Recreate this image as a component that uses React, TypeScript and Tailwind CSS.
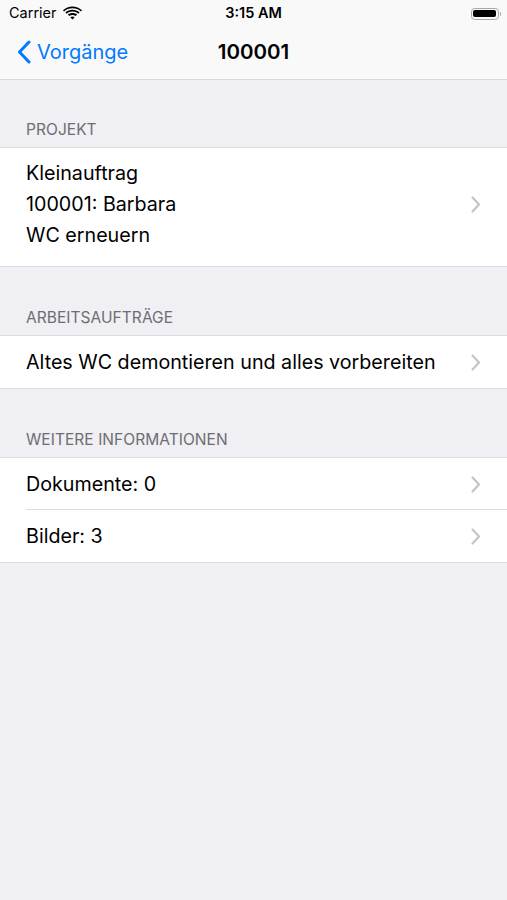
import React from "react";

const Chevron = () => (
  <svg width="10" height="17" viewBox="0 0 10 17" className="shrink-0">
    <path d="M1.5 1.5 L8 8.5 L1.5 15.5" fill="none" stroke="#c4c4c9" strokeWidth="2.2" strokeLinecap="round" strokeLinejoin="round" />
  </svg>
);

const Header = ({ title, h }: { title: string; h: string }) => (
  <div className={`${h} flex items-end pl-[26px] pb-[8px]`}>
    <span className="text-[15.5px] leading-[18px] tracking-[0.05px] text-[#6d6d72] uppercase">{title}</span>
  </div>
);

const Row = ({ text, sep }: { text: string; sep?: boolean }) => (
  <div className="relative flex h-[52px] items-center justify-between pl-[26px] pr-[26px]">
    <span className="text-[19.7px] leading-[24px] text-black">{text}</span>
    <Chevron />
    {sep && <div className="absolute bottom-0 left-[26px] right-0 h-px bg-[#dcdce0]" />}
  </div>
);

export default function App() {
  return (
    <div className="min-h-[900px] w-[507px] bg-[#efeff4]" style={{ fontFamily: "Inter, 'Liberation Sans', sans-serif" }}>
      {/* status + nav */}
      <div className="bg-[#f9f9f9] border-b border-[#d9d9dc]">
        <div className="relative flex h-[25px] items-center pl-[9px] pr-[6px] pt-[2px]">
          <span className="text-[14.5px] leading-none text-black">Carrier</span>
          <svg width="19" height="14" viewBox="0 0 19 14" className="ml-[6px] mt-[-2px]">
            <path d="M9.5 2.2 C6.2 2.2 3.3 3.4 1 5.4 L0 4.2 C2.6 1.9 5.9 0.5 9.5 0.5 C13.1 0.5 16.4 1.9 19 4.2 L18 5.4 C15.7 3.4 12.8 2.2 9.5 2.2 Z" fill="#000" />
            <path d="M9.5 5.6 C7.3 5.6 5.3 6.4 3.7 7.7 L2.4 6.3 C4.3 4.7 6.8 3.8 9.5 3.8 C12.2 3.8 14.7 4.7 16.6 6.3 L15.3 7.7 C13.7 6.4 11.7 5.6 9.5 5.6 Z" fill="#000" />
            <path d="M9.5 8.9 C8.3 8.9 7.2 9.3 6.3 10 L4.9 8.6 C6.2 7.6 7.8 7.1 9.5 7.1 C11.2 7.1 12.8 7.6 14.1 8.6 L12.7 10 C11.8 9.3 10.7 8.9 9.5 8.9 Z" fill="#000" />
            <path d="M9.5 13.5 L7.4 11.4 C8 10.9 8.7 10.6 9.5 10.6 C10.3 10.6 11 10.9 11.6 11.4 Z" fill="#000" />
          </svg>
          <span className="absolute left-1/2 -translate-x-1/2 text-[14.5px] font-semibold leading-none text-black">3:15 AM</span>
          <div className="ml-auto flex items-center">
            <div className="flex h-[12px] w-[28px] items-center rounded-[3.5px] border border-[#a8a8a8] p-[1.5px]">
              <div className="h-full w-full rounded-[2px] bg-black" />
            </div>
            <div className="ml-[1px] h-[4px] w-[1.5px] rounded-r-sm bg-[#a8a8a8]" />
          </div>
        </div>
        <div className="relative flex h-[54px] items-center">
          <div className="flex items-center pl-[17px]">
            <svg width="14" height="24" viewBox="0 0 14 24">
              <path d="M12 2 L2.5 12 L12 22" fill="none" stroke="#007aff" strokeWidth="3" strokeLinecap="round" strokeLinejoin="round" />
            </svg>
            <span className="ml-[6px] text-[20px] leading-none text-[#007aff]">Vorgänge</span>
          </div>
          <span className="absolute left-1/2 -translate-x-1/2 text-[20.5px] font-semibold leading-none text-black">100001</span>
        </div>
      </div>

      <Header title="Projekt" h="h-[67px]" />
      <div className="border-y border-[#dcdce0] bg-white">
        <div className="flex items-center justify-between pl-[26px] pr-[26px] pt-[10px] pb-[15px]">
          <div className="flex flex-col text-[19.7px] leading-[31px] text-black">
            <span>Kleinauftrag</span>
            <span>100001: Barbara</span>
            <span>WC erneuern</span>
          </div>
          <Chevron />
        </div>
      </div>

      <Header title="Arbeitsaufträge" h="h-[68px]" />
      <div className="border-y border-[#dcdce0] bg-white">
        <Row text="Altes WC demontieren und alles vorbereiten" />
      </div>

      <Header title="Weitere Informationen" h="h-[68px]" />
      <div className="border-y border-[#dcdce0] bg-white">
        <Row text="Dokumente: 0" sep />
        <Row text="Bilder: 3" />
      </div>
    </div>
  );
}
